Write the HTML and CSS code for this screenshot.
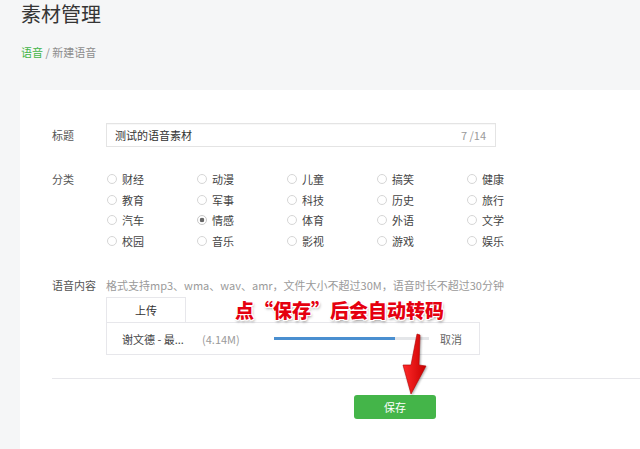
FILE: index.html
```html
<!DOCTYPE html>
<html lang="zh-CN">
<head>
  <meta charset="UTF-8">
  <title>素材管理</title>
  <link rel="stylesheet" href="styles.css">
</head>
<body>
  <div class="page-head">
    <h1 class="page-title">素材管理</h1>
    <div class="crumbs"><a class="crumb-link">语音</a> / 新建语音</div>
  </div>

  <div class="card">

    <!-- 标题 -->
    <div class="form-row title-row">
      <label class="form-label">标题</label>
      <div class="text-input">
        <span class="input-value">测试的语音素材</span>
        <span class="input-count">7 /14</span>
      </div>
    </div>

    <!-- 分类 -->
    <div class="form-row cate-row">
      <label class="form-label">分类</label>
      <div class="radio-grid">
        <span class="radio">财经</span>
        <span class="radio">动漫</span>
        <span class="radio">儿童</span>
        <span class="radio">搞笑</span>
        <span class="radio">健康</span>
        <span class="radio">教育</span>
        <span class="radio">军事</span>
        <span class="radio">科技</span>
        <span class="radio">历史</span>
        <span class="radio">旅行</span>
        <span class="radio">汽车</span>
        <span class="radio checked">情感</span>
        <span class="radio">体育</span>
        <span class="radio">外语</span>
        <span class="radio">文学</span>
        <span class="radio">校园</span>
        <span class="radio">音乐</span>
        <span class="radio">影视</span>
        <span class="radio">游戏</span>
        <span class="radio">娱乐</span>
      </div>
    </div>

    <!-- 语音内容 -->
    <div class="form-row voice-row">
      <label class="form-label">语音内容</label>
      <div class="voice-body">
        <p class="hint">格式支持mp3、wma、wav、amr，文件大小不超过30M，语音时长不超过30分钟</p>
        <div class="upload-tab">上传</div>
        <div class="upload-panel">
          <span class="file-name">谢文德 - 最...</span>
          <span class="file-size">(4.14M)</span>
          <div class="progress"><div class="progress-fill" style="width: 78%"></div></div>
          <a class="cancel">取消</a>
        </div>
      </div>
    </div>

    <div class="divider"></div>

    <div class="form-foot">
      <button class="save-btn">保存</button>
    </div>
  </div>

  <!-- annotation over the screenshot -->
  <div class="note">点“保存”后会自动转码</div>
  <svg class="note-arrow" width="34" height="66" viewBox="0 0 34 66">
    <defs>
      <linearGradient id="arrowFill" x1="0" y1="0" x2="1" y2="0">
        <stop offset="0" stop-color="#ff2a2a"/>
        <stop offset="1" stop-color="#c80000"/>
      </linearGradient>
    </defs>
    <path d="M18,2 L21,3 L20,33 L27,34 L12,62 L4,33 L12,33 Z" fill="url(#arrowFill)" stroke="#b30000" stroke-width="0.6"/>
  </svg>
</body>
</html>
```

FILE: styles.css
```css
body {
  margin: 0;
  background-color: #f5f6f7;
  font-family: "Noto Sans CJK SC", sans-serif;
  font-size: 11px;
  color: #353535;
  height: 449px;
  overflow: hidden;
  position: relative;
}

/* header: title + breadcrumb */
.page-head {
  padding-left: 21px;
}
.page-title {
  margin: 0;
  font-size: 20px;
  font-weight: normal;
  line-height: 28px;
  color: #353535;
}
.crumbs {
  margin-top: 16px;
  line-height: 16px;
  font-size: 11px;
  color: #8d8d8d;
}
.crumb-link {
  color: #44b549;
}

/* white card */
.card {
  margin-top: 30px;
  margin-left: 20px;
  background-color: #fff;
  height: 359px;
  box-sizing: border-box;
  padding-top: 33px;
}

.form-row {
  display: flex;
  padding-left: 32px;
}
.form-label {
  width: 54px;
  flex-shrink: 0;
  color: #555;
  line-height: 16px;
}

/* title input */
.title-row .form-label {
  line-height: 24px;
}
.text-input {
  width: 390px;
  height: 24px;
  border: 1px solid #e4e4e4;
  display: flex;
  align-items: center;
  justify-content: space-between;
  padding: 0 9px 0 8px;
  box-sizing: border-box;
  box-shadow: inset 0 1px 1px rgba(0,0,0,0.03);
}
.input-value {
  color: #333;
}
.input-count {
  color: #9a9a9a;
}

/* category radios */
.cate-row {
  margin-top: 22px;
}
.cate-row .form-label {
  line-height: 20px;
}
.radio-grid {
  display: grid;
  grid-template-columns: repeat(5, 90px);
  grid-auto-rows: 20.5px;
}
.radio {
  display: flex;
  align-items: center;
  color: #444;
}
.radio::before {
  content: "";
  width: 8px;
  height: 8px;
  border: 1px solid #d6d6d6;
  border-radius: 50%;
  margin-left: 1px;
  margin-right: 5px;
  box-sizing: content-box;
}
.radio.checked::before {
  border-color: #c8c8c8;
  background: radial-gradient(circle, #666 0, #666 2px, #fff 2.6px);
}

/* voice content */
.voice-row {
  margin-top: 26px;
}
.voice-body {
  flex: 1;
}
.hint {
  margin: 0;
  line-height: 16px;
  color: #9a9a9a;
}
.upload-tab {
  margin-top: 4px;
  width: 80px;
  height: 25px;
  line-height: 25px;
  text-align: center;
  border: 1px solid #e7e7eb;
  border-bottom: none;
  box-sizing: border-box;
  color: #333;
}
.upload-panel {
  width: 374px;
  height: 33px;
  border: 1px solid #e7e7eb;
  box-sizing: border-box;
  display: flex;
  align-items: center;
  padding-left: 15px;
}
.file-name {
  width: 80px;
  color: #444;
}
.file-size {
  width: 72px;
  color: #9a9a9a;
}
.progress {
  width: 155px;
  height: 3px;
  background-color: #e4e6e9;
}
.progress-fill {
  height: 100%;
  background-color: #4a8fd0;
}
.cancel {
  margin-left: 11px;
  color: #666;
}

.divider {
  margin-top: 23px;
  margin-left: 32px;
  height: 1px;
  background-color: #e7e7eb;
}

.form-foot {
  padding-left: 334px;
  padding-top: 16px;
}
.save-btn {
  width: 82px;
  height: 24px;
  border: none;
  border-radius: 3px;
  background-color: #44b549;
  color: #fff;
  font-family: inherit;
  font-size: 11px;
  padding: 0;
}

/* annotation */
.note {
  position: absolute;
  left: 235px;
  top: 299px;
  font-size: 19px;
  line-height: 22px;
  font-weight: 900;
  color: #e5000f;
  white-space: nowrap;
  text-shadow:
    -1px -1px 0 #fff, 1px -1px 0 #fff, -1px 1px 0 #fff, 1px 1px 0 #fff,
    0 -1px 0 #fff, 0 1px 0 #fff, -1px 0 0 #fff, 1px 0 0 #fff,
    1px 2px 3px rgba(0,0,0,0.45);
}
.note-arrow {
  position: absolute;
  left: 399px;
  top: 332px;
  filter: drop-shadow(1px 1px 1px rgba(0,0,0,0.35));
}
```
